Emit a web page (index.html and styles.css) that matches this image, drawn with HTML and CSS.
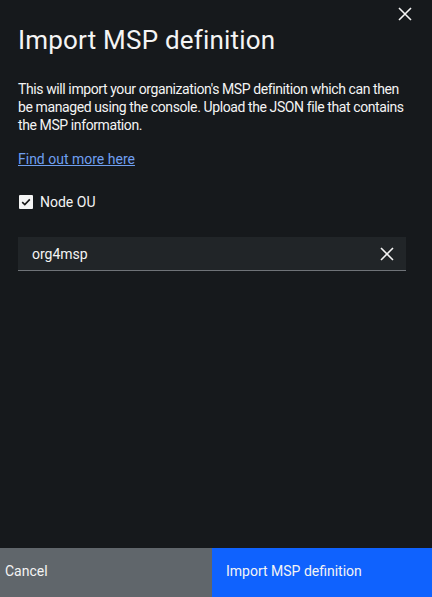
FILE: index.html
```html
<!DOCTYPE html>
<html lang="en">
<head>
<meta charset="utf-8">
<title>Import MSP definition</title>
<link rel="stylesheet" href="styles.css">
</head>
<body>
<div class="modal">
  <button class="close" aria-label="Close">
    <svg width="14" height="14" viewBox="0 0 14 14"><path d="M1 1L13 13M13 1L1 13" stroke="#f4f4f4" stroke-width="1.6" fill="none"/></svg>
  </button>
  <div class="content">
    <h1 class="title">Import MSP definition</h1>
    <p class="desc">This will import your organization's MSP definition which can then<br>be managed using the console. Upload the JSON file that contains<br>the MSP information.</p>
    <a class="link" href="#">Find out more here</a>
    <label class="check">
      <span class="box">
        <svg width="10" height="8" viewBox="0 0 10 8"><path d="M1.2 4.2L3.8 6.6L8.8 1.4" stroke="#161616" stroke-width="1.6" fill="none"/></svg>
      </span>
      <span class="check-label">Node OU</span>
    </label>
    <div class="field">
      <span class="field-value">org4msp</span>
      <svg class="clear" width="14" height="14" viewBox="0 0 14 14"><path d="M1 1L13 13M13 1L1 13" stroke="#f4f4f4" stroke-width="1.6" fill="none"/></svg>
    </div>
  </div>
  <div class="footer">
    <button class="btn btn-secondary">Cancel</button>
    <button class="btn btn-primary">Import MSP definition</button>
  </div>
</div>
</body>
</html>
```
FILE: styles.css
```css
* { box-sizing: border-box; }
html, body { margin: 0; padding: 0; height: 100%; }
body {
  background: #16191c;
  font-family: Roboto, "Noto Sans", sans-serif;
  color: #f4f4f4;
}
.modal {
  position: relative;
  height: 597px;
  display: flex;
  flex-direction: column;
}
.close {
  position: absolute;
  top: 7px;
  right: 20px;
  width: 14px;
  height: 14px;
  padding: 0;
  border: 0;
  background: none;
  display: flex;
}
.content {
  flex: 1;
  padding: 24px 26px 0 18px;
  display: flex;
  flex-direction: column;
}
.title {
  margin: 0;
  font-size: 26px;
  font-weight: 400;
  line-height: 32px;
  letter-spacing: 0.2px;
}
.desc {
  margin: 24px -14px 0 0;
  font-size: 14px;
  line-height: 18px;
  letter-spacing: -0.4px;
  white-space: nowrap;
}
.link {
  margin-top: 16px;
  align-self: flex-start;
  font-size: 14px;
  line-height: 18px;
  color: #6f9ff0;
}
.check {
  margin-top: 25px;
  display: flex;
  align-items: center;
  gap: 7px;
  margin-left: 1px;
}
.box {
  width: 14px;
  height: 14px;
  background: #f4f4f4;
  border-radius: 1px;
  display: flex;
  align-items: center;
  justify-content: center;
}
.check-label {
  font-size: 14px;
  line-height: 18px;
}
.field {
  margin-top: 26px;
  height: 34px;
  background: #212528;
  border-bottom: 1px solid #6f7378;
  display: flex;
  align-items: center;
  justify-content: space-between;
  padding: 0 12px 0 14px;
}
.field-value { font-size: 14px; }
.footer {
  display: flex;
  height: 49px;
}
.btn {
  border: 0;
  font-family: inherit;
  font-size: 14px;
  color: #f4f4f4;
  text-align: left;
  padding: 0 0 3px 0;
  height: 49px;
}
.btn-secondary {
  width: 212px;
  background: #60666b;
  padding-left: 5px;
}
.btn-primary {
  flex: 1;
  background: #0f62fe;
  padding-left: 14px;
}
```
